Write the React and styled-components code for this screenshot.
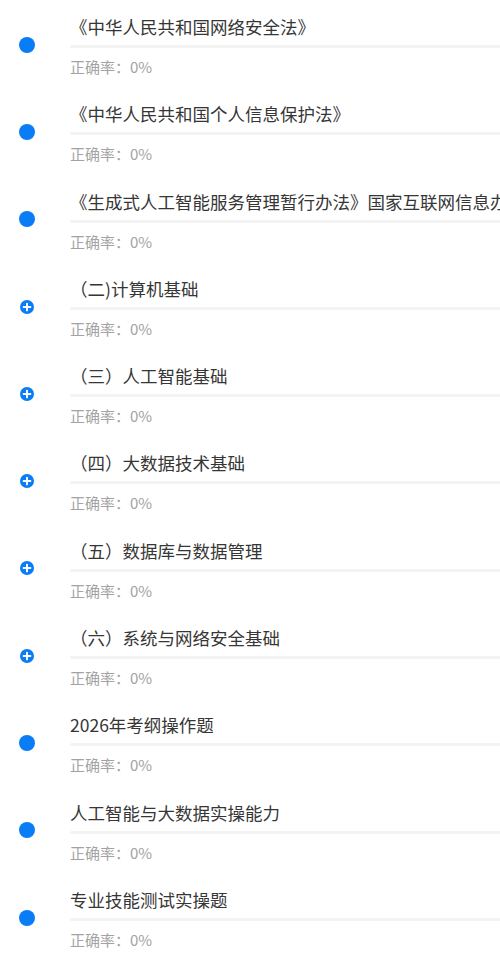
import styled, { createGlobalStyle } from 'styled-components'

const GlobalStyle = createGlobalStyle`
  html, body {
    margin: 0;
    padding: 0;
    background: #ffffff;
    overflow: hidden;
  }
  body {
    font-family: "Noto Sans CJK SC", "Noto Sans", sans-serif;
  }
`;

const List = styled.div`
  width: 500px;
  display: flex;
  flex-direction: column;
  overflow: hidden;
`;

const Row = styled.div`
  height: 87.3px;
  display: flex;
  align-items: stretch;
`;

const IconCol = styled.div`
  width: 70px;
  flex: none;
  display: flex;
  align-items: flex-start;
  justify-content: center;
  padding-top: ${p => (p.$plus ? 37.7 : 36.7)}px;
  padding-right: ${p => (p.$plus ? 17 : 16)}px;
  box-sizing: border-box;
`;

const Dot = styled.span`
  width: 16px;
  height: 16px;
  border-radius: 50%;
  background: #0a7cf6;
`;

const PlusIcon = styled.svg`
  width: 14px;
  height: 14px;
  display: block;
`;

const Body = styled.div`
  flex: 1;
  min-width: 0;
  padding-top: 15px;
  display: flex;
  flex-direction: column;
  overflow: hidden;
`;

const Title = styled.div`
  font-size: 17.5px;
  line-height: 24px;
  height: 24px;
  color: #363636;
  white-space: nowrap;
`;

const Track = styled.div`
  margin-top: 6px;
  height: 3px;
  width: 100%;
  background: #f3f3f3;
  border-radius: 2px 0 0 2px;
`;

const Rate = styled.div`
  margin-top: 9px;
  font-size: 15px;
  line-height: 20px;
  color: #a3a3a3;
`;

const items = [
  { title: '《中华人民共和国网络安全法》' },
  { title: '《中华人民共和国个人信息保护法》' },
  { title: '《生成式人工智能服务管理暂行办法》国家互联网信息办公室' },
  { title: '（二)计算机基础', plus: true },
  { title: '（三）人工智能基础', plus: true },
  { title: '（四）大数据技术基础', plus: true },
  { title: '（五）数据库与数据管理', plus: true },
  { title: '（六）系统与网络安全基础', plus: true },
  { title: '2026年考纲操作题' },
  { title: '人工智能与大数据实操能力' },
  { title: '专业技能测试实操题' },
];

const Plus = () => (
  <PlusIcon viewBox="0 0 14 14">
    <circle cx="7" cy="7" r="7" fill="#0a7cf6" />
    <path d="M7 3.6v6.8M3.6 7h6.8" stroke="#fff" strokeWidth="1.9" strokeLinecap="round" />
  </PlusIcon>
);

const App = () => {
  return (
    <List>
      <GlobalStyle />
      {items.map((it, i) => (
        <Row key={i}>
          <IconCol $plus={it.plus}>
            {it.plus ? <Plus /> : <Dot />}
          </IconCol>
          <Body>
            <Title>{it.title}</Title>
            <Track />
            <Rate>正确率：0%</Rate>
          </Body>
        </Row>
      ))}
    </List>
  )
}

export default App
